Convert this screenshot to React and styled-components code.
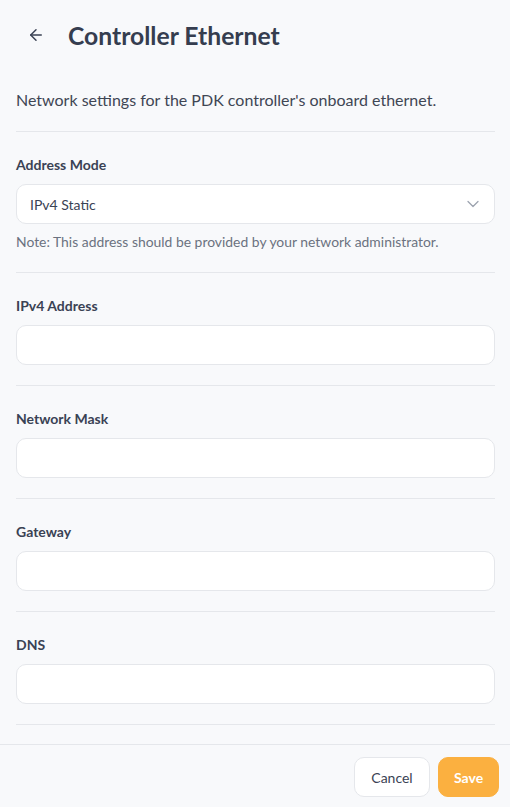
import React from "react";
import styled, { createGlobalStyle } from "styled-components";
import { ArrowLeft, ChevronDown } from "lucide-react";

const Global = createGlobalStyle`
  * { box-sizing: border-box; }
  html, body { margin: 0; padding: 0; height: 100%; }
  body {
    background: #f8f9fb;
    font-family: Lato, "Noto Sans", sans-serif;
    color: #374151;
  }
  #root { height: 100%; }
`;

const Page = styled.div`
  display: flex;
  flex-direction: column;
  height: 100vh;
  background: #f8f9fb;
`;

const Header = styled.header`
  display: flex;
  align-items: center;
  gap: 12px;
  height: 70px;
  padding: 0 16px;
`;

const BackButton = styled.button`
  display: flex;
  align-items: center;
  justify-content: center;
  width: 40px;
  height: 40px;
  padding: 0;
  border: none;
  background: transparent;
  color: #3a4254;
  border-radius: 8px;
  cursor: pointer;
`;

const Title = styled.h1`
  margin: 0;
  font-size: 24.7px;
  font-weight: 700;
  color: #353d4f;
  letter-spacing: 0;
`;

const Main = styled.main`
  flex: 1;
  overflow: auto;
  padding: 0 15px 20px 16px;
`;

const Description = styled.p`
  margin: 0;
  padding: 18px 0 19px;
  font-size: 16px;
  line-height: 24px;
  color: #3f4654;
  border-bottom: 1px solid #e5e7eb;
`;

const Section = styled.section`
  padding: 23px 0 20px;
  border-bottom: 1px solid #e5e7eb;
`;

const Label = styled.label`
  display: block;
  margin-bottom: 9px;
  font-size: 14px;
  line-height: 20px;
  font-weight: 700;
  color: #3a4254;
`;

const fieldBase = `
  width: 100%;
  height: 40px;
  border: 1px solid #e5e7eb;
  border-radius: 10px;
  background: #ffffff;
  font-family: Lato, "Noto Sans", sans-serif;
  font-size: 14px;
  color: #374151;
`;

const Input = styled.input`
  ${fieldBase}
  display: block;
  padding: 0 13px;
  outline: none;
`;

const SelectBox = styled.div`
  ${fieldBase}
  display: flex;
  align-items: center;
  justify-content: space-between;
  padding: 0 11px 0 13px;
`;

const SelectValue = styled.span`
  font-size: 14px;
  color: #3a4254;
`;

const Note = styled.p`
  margin: 8px 0 0;
  font-size: 13.9px;
  line-height: 20px;
  color: #6b7280;
`;

const Footer = styled.footer`
  display: flex;
  justify-content: flex-end;
  gap: 8px;
  padding: 12px 11px 10px;
  border-top: 1px solid #e5e7eb;
  background: #f8f9fb;
`;

const Button = styled.button`
  height: 40px;
  padding: 0 ${(p) => (p.$primary ? "15px" : "16px")};
  border-radius: 10px;
  font-family: Lato, "Noto Sans", sans-serif;
  font-size: 14px;
  cursor: pointer;
  border: 1px solid ${(p) => (p.$primary ? "#fbb040" : "#e5e7eb")};
  background: ${(p) => (p.$primary ? "#fbb040" : "#ffffff")};
  color: ${(p) => (p.$primary ? "#ffffff" : "#3a4254")};
  font-weight: ${(p) => (p.$primary ? 700 : 400)};
  width: ${(p) => (p.$primary ? "61px" : "76px")};
`;

const fields = ["IPv4 Address", "Network Mask", "Gateway", "DNS"];

export default function App() {
  return (
    <>
      <Global />
      <Page>
        <Header>
          <BackButton aria-label="Back">
            <ArrowLeft size={18} strokeWidth={2} />
          </BackButton>
          <Title>Controller Ethernet</Title>
        </Header>
        <Main>
          <Description>
            Network settings for the PDK controller's onboard ethernet.
          </Description>
          <Section>
            <Label>Address Mode</Label>
            <SelectBox>
              <SelectValue>IPv4 Static</SelectValue>
              <ChevronDown size={20} strokeWidth={1.5} color="#9ca3af" />
            </SelectBox>
            <Note>
              Note: This address should be provided by your network administrator.
            </Note>
          </Section>
          {fields.map((f) => (
            <Section key={f}>
              <Label>{f}</Label>
              <Input type="text" />
            </Section>
          ))}
        </Main>
        <Footer>
          <Button>Cancel</Button>
          <Button $primary>Save</Button>
        </Footer>
      </Page>
    </>
  );
}
